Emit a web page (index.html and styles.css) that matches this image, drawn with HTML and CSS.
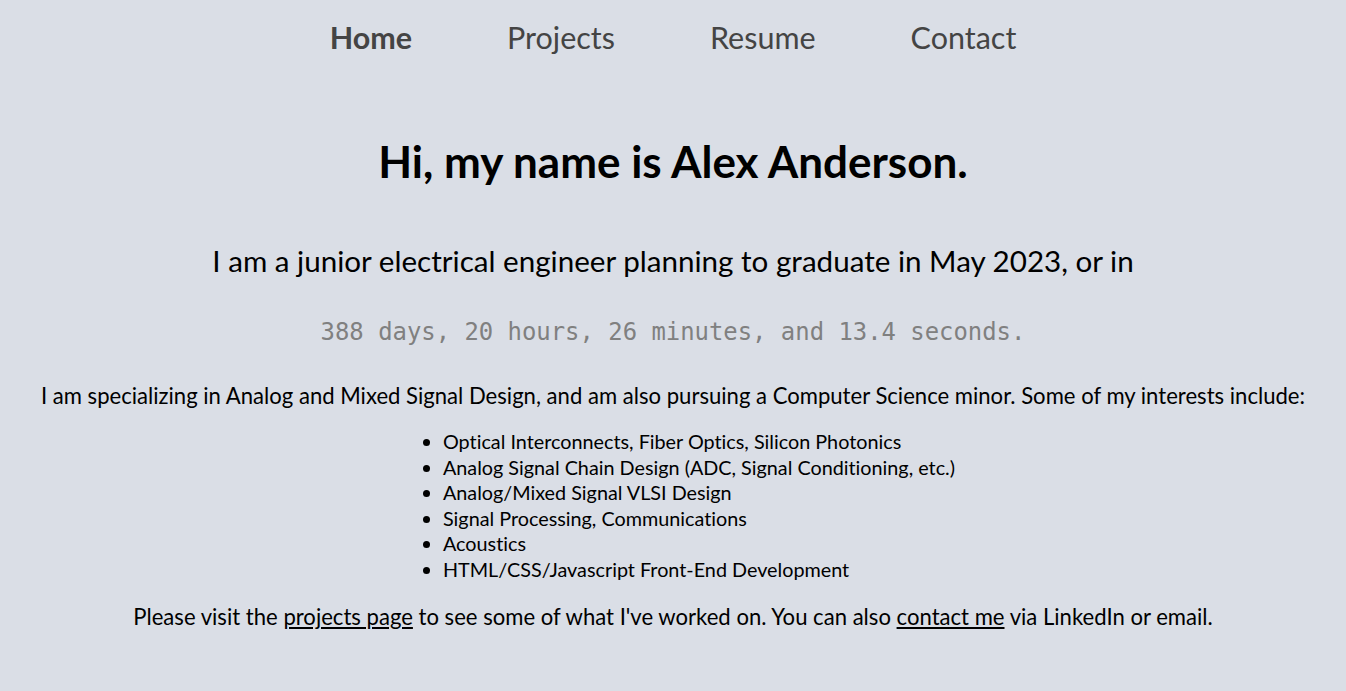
FILE: index.html
```html
<!DOCTYPE html>
<html lang="en">
<head>
<meta charset="utf-8">
<title>Alex Anderson</title>
<link rel="stylesheet" href="styles.css">
</head>
<body>
<nav class="nav">
  <a class="nav-link active" href="#">Home</a>
  <a class="nav-link" href="#">Projects</a>
  <a class="nav-link" href="#">Resume</a>
  <a class="nav-link" href="#">Contact</a>
</nav>
<main class="content">
  <h1 class="title">Hi, my name is Alex Anderson.</h1>
  <p class="lead">I am a junior electrical engineer planning to graduate in May 2023, or in</p>
  <p class="countdown">388 days, 20 hours, 26 minutes, and 13.4 seconds.</p>
  <p class="text">I am specializing in Analog and Mixed Signal Design, and am also pursuing a Computer Science minor. Some of my interests include:</p>
  <div class="list-wrap">
    <ul class="interests">
      <li>Optical Interconnects, Fiber Optics, Silicon Photonics</li>
      <li>Analog Signal Chain Design (ADC, Signal Conditioning, etc.)</li>
      <li>Analog/Mixed Signal VLSI Design</li>
      <li>Signal Processing, Communications</li>
      <li>Acoustics</li>
      <li>HTML/CSS/Javascript Front-End Development</li>
    </ul>
  </div>
  <p class="text">Please visit the <a href="#">projects page</a> to see some of what I've worked on. You can also <a href="#">contact me</a> via LinkedIn or email.</p>
</main>
</body>
</html>
```
FILE: styles.css
```css
html, body {
  margin: 0;
  padding: 0;
}
body {
  background: #dadee6;
  font-family: Lato, "Open Sans", sans-serif;
  font-variant-ligatures: no-common-ligatures;
  color: #000;
}
.nav {
  display: flex;
  justify-content: center;
  gap: 95px;
  padding-top: 17px;
}
.nav-link {
  font-size: 30.5px;
  line-height: 40px;
  color: #444;
  text-decoration: none;
}
.nav-link.active {
  font-weight: bold;
}
.content {
  text-align: center;
}
.title {
  font-size: 44px;
  font-weight: bold;
  letter-spacing: 0;
  margin: 74px 0 0;
  line-height: 60px;
}
.lead {
  font-size: 29.6px;
  margin: 50px 0 0;
  line-height: 40px;
}
.countdown {
  font-family: "DejaVu Sans Mono", monospace;
  font-size: 23.9px;
  color: #808080;
  margin: 36px 0 0;
  line-height: 30px;
}
.text {
  font-size: 22.1px;
  line-height: 26px;
  margin: 36px 0 0;
}
.list-wrap {
  text-align: center;
  margin-top: 20px;
}
.interests {
  display: inline-block;
  text-align: left;
  margin: 0 0 0 12px;
  padding-left: 40px;
  font-size: 19.8px;
  line-height: 25.5px;
}
.text a {
  color: #000;
}
.list-wrap + .text {
  margin-top: 22px;
}
```
